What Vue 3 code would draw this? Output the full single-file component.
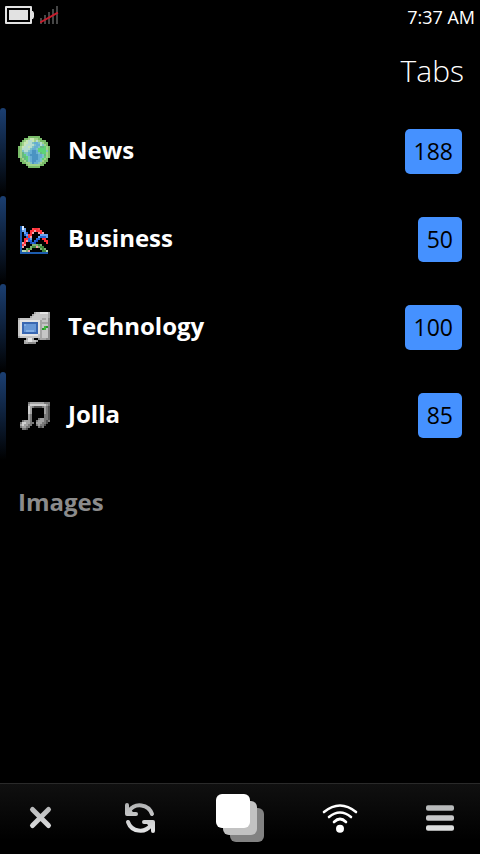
<script setup>
import { ref } from 'vue'

const palettes = {
  globe: { g: '#78bb68', l: '#a0d18a', w: '#c8e6b4', c: '#b5dcd0', t: '#7dc2c5', b: '#66add3', d: '#4a93c2', e: '#5dd477', f: '#66b880' },
  chart: { A: '#1c5cae', w: '#dceaff', v: '#6aa5ee', b: '#2467d8', B: '#1746bd', r: '#ff4a50', R: '#ff3038', p: '#f3a0a6', g: '#7fae72', G: '#41893c', q: '#b9d7b1' },
  computer: { k: '#8c8c8c', h: '#e4e4e4', m: '#c6c6c6', n: '#a5a5a5', x: '#3a68b2', s: '#6797d6', S: '#82aee4', e: '#42b83e', E: '#2b9a2d' },
  music: { h: '#cfcfcf', m: '#a2a2a2', n: '#787878', k: '#505050' },
}

const bitmaps = {
  globe: [
    '.....gggggg.....',
    '...gglwwllgg....',
    '..glwccwlclggg..',
    '.glwwcctbbtclgg.',
    '.glwcccctbbctlg.',
    'glwccwctbbtffelg',
    'glcccctbbteeeelg',
    'gltcctbddbeeeetg',
    'glfttbbddbtfeelg',
    'glfetbddddbbtflg',
    'glffetbdddbbtelg',
    '.glfetbdddbtelg.',
    '.gglftbddbbtlgg.',
    '..gglltdbbtlgg..',
    '....gllllllgg...',
    '.....gggggg.....',
  ],
  chart: [
    '................',
    '.Aw.............',
    '.Awv...rRRr.....',
    '.Avv..RRpRRR....',
    '.A.vb.Rp..pRp...',
    '.A.bvRR....vvvv.',
    '.A..bRp...vbbbv.',
    '.A.RRbv..bb.RR..',
    '.A.Rpbb.bB...RR.',
    '.ApR..BbB.....R.',
    '.ARp...gggGg....',
    '.Ap...gGGpgGG...',
    '.A..gGg....gGg..',
    '.Aqqgp......GGq.',
    '.AAAAAAAAAAAAAA.',
    '................',
  ],
  computer: [
    '........nmmhhhhn',
    '.......nmmmmmmmn',
    '......nmmmmmmmmn',
    'nmmmmmmmmmmmnnmk',
    'mhhhhhhhhhhnmmmk',
    'mhxxxxxxxxhnnnnk',
    'mhxSsssssxhnmmmk',
    'mhxssssssxhnmeEk',
    'mhxssssssxhnEemk',
    'mhxsSSSSsxhnmmmk',
    'mhxxxxxxxxhnmmmk',
    'mhhhhhhhhhmnmmmk',
    'nmmmmmmmmmmnmmmk',
    '....nhhn..knnnkk',
    '...nmhhmmn......',
    '...nnkkkk.......',
  ],
  music: [
    '................',
    '.....nmmmmmmmnnn',
    '.....mhhhhhhhhmn',
    '.....hmnkkkknmnk',
    '.....hm......mnk',
    '.....hm......mnk',
    '.....hm......mnk',
    '.....mn......nnk',
    '.....mn......nnk',
    '.....mn...nmmnnk',
    '..nmmmn..nmmmnkn',
    '.nhhmmnn.mmmnnk.',
    '.mhmmnn..nmnnk..',
    '.nmmnn....nkn...',
    '..nnk...........',
    '................',
  ],
}

function pixels(name) {
  return bitmaps[name].flatMap((line, y) =>
    [...line].map((key, x) => ({ x, y, fill: palettes[name][key] })).filter((p) => p.fill),
  )
}

const tabs = [
  { title: 'News', count: 188, icon: 'globe' },
  { title: 'Business', count: 50, icon: 'chart' },
  { title: 'Technology', count: 100, icon: 'computer' },
  { title: 'Jolla', count: 85, icon: 'music' },
  { title: 'Images' },
].map((tab) => ({ ...tab, pixels: tab.icon ? pixels(tab.icon) : [] }))

const time = ref('7:37 AM')
const bars = [0, 1, 2, 3, 4]
</script>

<template>
  <div class="screen">
    <div class="status">
      <div class="indicators">
        <svg width="30" height="18" viewBox="0 0 30 18" aria-hidden="true">
          <path fill="#e2e2e2" fill-rule="evenodd" d="M1 0H26Q27 0 27 1V5H28L29 7V11L28 13H27V17Q27 18 26 18H1Q0 18 0 17V1Q0 0 1 0ZM2 2V16H25V2Z" />
          <rect x="4" y="4" width="19" height="10" fill="#e2e2e2" />
        </svg>
        <svg width="19" height="18" viewBox="0 0 19 18" aria-hidden="true">
          <rect v-for="i in bars" :key="i" :x="i * 4" :y="12 - i * 3" width="2" :height="6 + i * 3" fill="#464646" />
          <path d="M1 16L17 7" stroke="#c81c2c" stroke-width="2" stroke-linecap="square" />
        </svg>
      </div>
      <time>{{ time }}</time>
    </div>

    <h1>Tabs</h1>

    <main>
      <ul>
        <li v-for="tab in tabs" :key="tab.title">
          <a href="#" class="row" :class="{ empty: !tab.count }">
            <svg v-if="tab.icon" class="favicon" viewBox="0 0 16 16" shape-rendering="crispEdges" aria-hidden="true">
              <rect v-for="(p, i) in tab.pixels" :key="i" :x="p.x" :y="p.y" width="1" height="1" :fill="p.fill" />
            </svg>
            <span class="title">{{ tab.title }}</span>
            <span v-if="tab.count" class="badge">{{ tab.count }}</span>
          </a>
        </li>
      </ul>
    </main>

    <nav class="toolbar">
      <button type="button" aria-label="Close">
        <svg width="48" height="48" viewBox="0 0 48 48">
          <defs>
            <linearGradient id="metal" gradientUnits="userSpaceOnUse" x1="0" y1="10" x2="0" y2="38">
              <stop offset="0" stop-color="#b2b3b4" />
              <stop offset="1" stop-color="#e2e3e4" />
            </linearGradient>
          </defs>
          <path d="M16.5 15.5L32.5 31.5M32.5 15.5L16.5 31.5" fill="none" stroke="url(#metal)" stroke-width="5" stroke-linecap="round" />
        </svg>
      </button>
      <button type="button" aria-label="Refresh">
        <svg width="48" height="48" viewBox="0 0 48 48">
          <g fill="none" stroke="url(#metal)" stroke-width="4" stroke-linecap="round" stroke-linejoin="round">
            <path d="M13 17A13 13 0 0 1 36 20" />
            <path d="M35 31A13 13 0 0 1 12 28" />
            <path d="M11 11V20H20M37 37V28H28" />
          </g>
          <path d="M12 13L19 20H12ZM36 35L29 28H36Z" fill="url(#metal)" />
        </svg>
      </button>
      <button type="button" aria-label="Tabs">
        <svg width="48" height="48" viewBox="0 0 48 48">
          <rect x="14" y="14" width="34" height="34" rx="6" fill="#828282" />
          <rect x="7" y="7" width="34" height="34" rx="6" fill="#c2c2c2" />
          <rect x="0" y="0" width="34" height="34" rx="6" fill="#fff" />
        </svg>
      </button>
      <button type="button" aria-label="Feeds">
        <svg width="48" height="48" viewBox="0 0 48 48">
          <g fill="none" stroke="#fff" stroke-width="2.6" stroke-linecap="round">
            <path d="M8 18Q24 5 40 18" />
            <path d="M13 23Q24 14 35 23" />
            <path d="M18 28Q24 22 30 28" />
          </g>
          <circle cx="24" cy="34.7" r="4" fill="#fff" />
        </svg>
      </button>
      <button type="button" aria-label="Menu">
        <svg width="48" height="48" viewBox="0 0 48 48">
          <rect x="10" y="11.3" width="28" height="5.4" rx="2" fill="#b8babb" />
          <rect x="10" y="21.3" width="28" height="5.4" rx="2" fill="#c6c7c8" />
          <rect x="10" y="31.3" width="28" height="5.4" rx="2" fill="#dcdddd" />
        </svg>
      </button>
    </nav>
  </div>
</template>

<style>
body {
  margin: 0;
  background: #000;
}
</style>

<style scoped>
.screen {
  display: flex;
  flex-direction: column;
  min-height: 100vh;
  background: #000;
  color: #fff;
  font-family: "Open Sans", "Noto Sans", sans-serif;
}
.status {
  display: flex;
  align-items: flex-start;
  justify-content: space-between;
  padding: 6px 5px 4px;
  font-size: 18px;
  line-height: 22px;
}
.indicators {
  display: flex;
  gap: 5px;
}
h1 {
  margin: 0;
  padding: 19px 16px 17px;
  font-size: 30px;
  line-height: 40px;
  font-weight: 300;
  text-align: right;
}
main {
  flex: 1;
}
ul {
  margin: 0;
  padding: 0;
  list-style: none;
}
.row {
  display: flex;
  align-items: flex-start;
  box-sizing: border-box;
  height: 88px;
  padding-right: 18px;
  color: #fff;
  text-decoration: none;
}
.row::before {
  content: "";
  align-self: stretch;
  width: 6px;
  margin-right: 12px;
  border-radius: 3px 3px 0 0;
  background: linear-gradient(#1b3f72, #000);
}
.row.empty {
  color: #8b8b8b;
}
.row.empty::before {
  background: none;
}
.favicon {
  width: 32px;
  height: 32px;
  margin: 28px 18px 0 0;
}
.title {
  flex: 1;
  margin-top: 20px;
  font-size: 24px;
  line-height: 44px;
  font-weight: 700;
}
.badge {
  margin-top: 21px;
  padding: 0 9px;
  border-radius: 5px;
  background: #4591ff;
  color: #000;
  font-size: 23px;
  line-height: 45px;
}
.toolbar {
  display: flex;
  justify-content: space-between;
  border-top: 1px solid #2a2a2a;
  background: linear-gradient(#101010, #000 80%);
}
.toolbar button {
  display: grid;
  place-items: start center;
  width: 80px;
  height: 70px;
  padding: 10px 0 0;
  border: 0;
  background: none;
}
</style>
